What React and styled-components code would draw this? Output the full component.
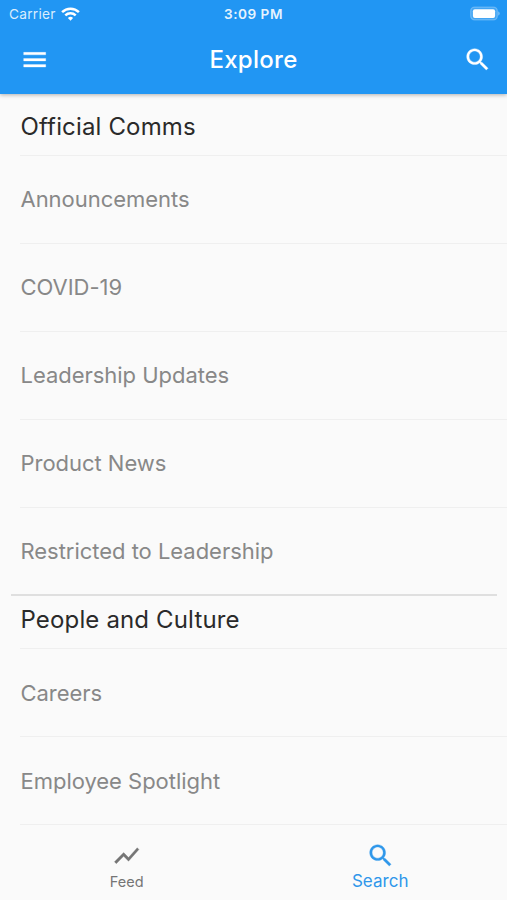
import React from "react";
import styled, { createGlobalStyle } from "styled-components";

const GlobalStyle = createGlobalStyle`
  * { box-sizing: border-box; }
  body { margin: 0; background: #fafafa; font-family: Inter, "Liberation Sans", sans-serif; }
`;

const Screen = styled.div`
  display: flex;
  flex-direction: column;
  width: 507px;
  height: 900px;
  overflow: hidden;
  background: #fafafa;
`;

const Header = styled.header`
  flex: none;
  height: 94px;
  background: #2196f3;
  color: #fff;
  box-shadow: 0 1px 4px rgba(0, 0, 0, 0.3);
  z-index: 1;
`;

const StatusBar = styled.div`
  display: grid;
  grid-template-columns: 1fr auto 1fr;
  align-items: center;
  height: 26px;
  padding: 1px 7px 0;
`;

const Carrier = styled.div`
  display: flex;
  align-items: center;
  gap: 5px;
  padding-left: 2px;
  font-size: 13.7px;
  line-height: 16px;
  letter-spacing: 0.25px;
  color: #d9edfd;
`;

const Clock = styled.div`
  font-size: 13.6px;
  line-height: 16px;
  font-weight: 600;
  letter-spacing: 0.5px;
  color: #e6f3fe;
`;

const BatterySlot = styled.div`
  display: flex;
  justify-content: flex-end;
`;

const Toolbar = styled.div`
  display: grid;
  grid-template-columns: 1fr auto 1fr;
  align-items: center;
  height: 68px;
  padding: 0 15px;
`;

const IconButton = styled.button`
  display: flex;
  justify-self: ${(p) => (p.$end ? "end" : "start")};
  padding: 0 0 0 ${(p) => (p.$end ? 0 : 5)}px;
  border: 0;
  background: none;
  color: inherit;
`;

const Title = styled.h1`
  margin: 0;
  font-size: 24px;
  line-height: 30px;
  font-weight: 500;
  letter-spacing: 0.3px;
`;

const Content = styled.main`
  flex: 1;
  min-height: 0;
  overflow: hidden;
  padding-top: 8px;
`;

const SectionTitle = styled.h2`
  display: flex;
  align-items: center;
  height: 54px;
  margin: 0 0 0 20px;
  padding: 0 0 5px 0.5px;
  border-bottom: 1px solid #efefef;
  font-size: 24px;
  font-weight: 400;
  letter-spacing: 0.15px;
  color: #2a2a2a;
`;

const Row = styled.div`
  display: flex;
  align-items: center;
  height: 88px;
  margin-left: 20px;
  padding: 0 0 0 0.5px;
  border-bottom: 1px solid ${(p) => (p.$last ? "transparent" : "#efefef")};
  font-size: 22px;
  letter-spacing: -0.03px;
  color: #888;
`;

const Section = styled.section`
  &:first-child ${Row} {
    padding-bottom: 1px;
  }
`;

const Divider = styled.hr`
  height: 2px;
  margin: -2px 10px -1px 11px;
  border: 0;
  background: #dfdfdf;
`;

const BottomNav = styled.nav`
  flex: none;
  display: grid;
  grid-template-columns: 1fr 1fr;
  height: 75px;
  background: #fafafa;
  z-index: 1;
`;

const NavItem = styled.a`
  display: flex;
  flex-direction: column;
  align-items: center;
  padding-top: 16px;
  color: ${(p) => (p.$active ? "#2f97ea" : "#757575")};
`;

const NavLabel = styled.span`
  margin-top: ${(p) => (p.$active ? 1 : 2)}px;
  font-size: ${(p) => (p.$active ? 17 : 14.5)}px;
  line-height: 20px;
  letter-spacing: 0.05px;
`;

const MaterialIcon = ({ path, size = 29.4 }) => (
  <svg width={size} height={size} viewBox="0 0 24 24" fill="currentColor" stroke="currentColor" strokeWidth="0.25" aria-hidden="true">
    <path d={path} />
  </svg>
);

const icons = {
  menu: "M3 18h18v-2H3v2zm0-5h18v-2H3v2zm0-7v2h18V6H3z",
  search:
    "M15.5 14h-.79l-.28-.27C15.41 12.59 16 11.11 16 9.5 16 5.91 13.09 3 9.5 3S3 5.91 3 9.5 5.91 16 9.5 16c1.61 0 3.09-.59 4.23-1.57l.27.28v.79l5 4.99L20.49 19l-4.99-5zm-6 0C7.01 14 5 11.99 5 9.5S7.01 5 9.5 5 14 7.01 14 9.5 11.99 14 9.5 14z",
  chart: "M3.5 18.49l6-6.01 4 4L22 6.92l-1.41-1.41-7.09 7.97-4-4L2 16.99z",
};

const Wifi = () => (
  <svg width="19" height="14" viewBox="0 0 19 14" fill="none" stroke="#fff" strokeWidth="2.5" aria-hidden="true">
    <path d="M1.1 5.1a12 12 0 0 1 16.8 0" />
    <path d="M4.3 8.3a7.5 7.5 0 0 1 10.4 0" />
    <path d="M9.5 13.7 6.9 11.1a3.7 3.7 0 0 1 5.2 0z" fill="#fff" stroke="none" />
  </svg>
);

const Battery = () => (
  <svg width="31" height="15" viewBox="0 0 31 15" aria-hidden="true">
    <rect x="1.7" y="1.1" width="26.6" height="12.8" rx="4" fill="#fff" fillOpacity="0.15" stroke="#fff" strokeOpacity="0.25" strokeWidth="1.4" />
    <rect x="3.9" y="3.2" width="22.2" height="8.8" rx="2" fill="#fff" />
    <path d="M29.2 5.5c2 .8 2 3.2 0 4z" fill="#fff" fillOpacity="0.4" />
  </svg>
);

const sections = [
  {
    title: "Official Comms",
    rows: ["Announcements", "COVID-19", "Leadership Updates", "Product News", "Restricted to Leadership"],
  },
  { title: "People and Culture", rows: ["Careers", "Employee Spotlight"] },
];

export default function App() {
  return (
    <Screen>
      <GlobalStyle />
      <Header>
        <StatusBar>
          <Carrier>
            Carrier
            <Wifi />
          </Carrier>
          <Clock>3:09 PM</Clock>
          <BatterySlot>
            <Battery />
          </BatterySlot>
        </StatusBar>
        <Toolbar>
          <IconButton aria-label="Menu">
            <MaterialIcon path={icons.menu} />
          </IconButton>
          <Title>Explore</Title>
          <IconButton $end aria-label="Search">
            <MaterialIcon path={icons.search} />
          </IconButton>
        </Toolbar>
      </Header>
      <Content>
        {sections.map((section, s) => (
          <React.Fragment key={section.title}>
            {s > 0 && <Divider />}
            <Section>
              <SectionTitle>{section.title}</SectionTitle>
              {section.rows.map((row, i) => (
                <Row key={row} $last={s === 0 && i === section.rows.length - 1}>
                  {row}
                </Row>
              ))}
            </Section>
          </React.Fragment>
        ))}
      </Content>
      <BottomNav>
        <NavItem>
          <MaterialIcon path={icons.chart} />
          <NavLabel>Feed</NavLabel>
        </NavItem>
        <NavItem $active>
          <MaterialIcon path={icons.search} />
          <NavLabel $active>Search</NavLabel>
        </NavItem>
      </BottomNav>
    </Screen>
  );
}
